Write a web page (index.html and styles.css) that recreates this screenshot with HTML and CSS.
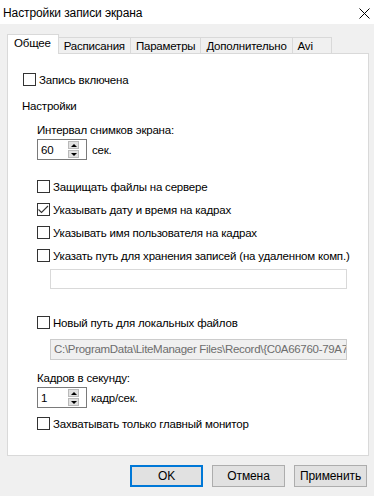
FILE: index.html
```html
<!DOCTYPE html>
<html lang="ru">
<head>
<meta charset="utf-8">
<title>Настройки записи экрана</title>
<link rel="stylesheet" href="styles.css">
</head>
<body>
<div class="window">
  <div class="titlebar">
    <span class="title">Настройки записи экрана</span>
    <svg class="close" width="11" height="11" viewBox="0 0 11 11"><path d="M0.5 0.5L10.5 10.5M10.5 0.5L0.5 10.5" stroke="#000" stroke-width="1" fill="none"/></svg>
  </div>
  <div class="content">
    <div class="tabs">
      <div class="tab active">Общее</div>
      <div class="tab">Расписания</div>
      <div class="tab">Параметры</div>
      <div class="tab">Дополнительно</div>
      <div class="tab">Avi</div>
    </div>
    <div class="panel">
      <div class="check top-check"><span class="box"></span><span>Запись включена</span></div>
      <div class="heading">Настройки</div>
      <div class="group">
        <div class="label">Интервал снимков экрана:</div>
        <div class="spin-row">
          <div class="spinner"><span class="spin-value">60</span><span class="spin"><span class="spin-btn up"><i></i></span><span class="spin-btn down"><i></i></span></span></div>
          <span class="unit">сек.</span>
        </div>
        <div class="checks">
          <div class="check"><span class="box"></span><span>Защищать файлы на сервере</span></div>
          <div class="check"><span class="box checked"><svg width="11" height="11" viewBox="0 0 11 11"><path d="M0.5 5.5L3.5 8.5L10 2" stroke="#333" stroke-width="1.1" fill="none"/></svg></span><span>Указывать дату и время на кадрах</span></div>
          <div class="check"><span class="box"></span><span>Указывать имя пользователя на кадрах</span></div>
          <div class="check"><span class="box"></span><span>Указать путь для хранения записей (на удаленном комп.)</span></div>
        </div>
        <div class="field"></div>
        <div class="check local-check"><span class="box"></span><span>Новый путь для локальных файлов</span></div>
        <div class="field disabled">C:\ProgramData\LiteManager Files\Record\{C0A66760-79A7</div>
        <div class="label fps-label">Кадров в секунду:</div>
        <div class="spin-row">
          <div class="spinner"><span class="spin-value">1</span><span class="spin"><span class="spin-btn up"><i></i></span><span class="spin-btn down"><i></i></span></span></div>
          <span class="unit unit-fps">кадр/сек.</span>
        </div>
        <div class="check last-check"><span class="box"></span><span>Захватывать только главный монитор</span></div>
      </div>
    </div>
    <div class="buttons">
      <button class="btn default">OK</button>
      <button class="btn">Отмена</button>
      <button class="btn">Применить</button>
    </div>
  </div>
</div>
</body>
</html>
```

FILE: styles.css
```css
* { box-sizing: border-box; }
html, body { margin: 0; padding: 0; }
body {
  width: 374px;
  height: 496px;
  overflow: hidden;
  background: #f0f0f0;
  font-family: "Liberation Sans", Arial, sans-serif;
  font-size: 11.5px;
  letter-spacing: -0.2px;
  color: #000;
}
.titlebar {
  height: 24px;
  background: #fff;
  display: flex;
  align-items: center;
  justify-content: space-between;
  padding: 1px 4px 0 3px;
}
.title { font-size: 12px; letter-spacing: -0.1px; color: #000; }
.close { display: block; margin-top: 1px; }

.content { padding: 10px 5px 0 7px; }

.tabs {
  display: flex;
  height: 20px;
  margin-bottom: -1px;
  position: relative;
}
.tab {
  height: 16px;
  margin-top: 3px;
  padding: 0 5px;
  min-width: 39px;
  border: 1px solid #d9d9d9;
  border-bottom: none;
  border-left: none;
  background: #f0f0f0;
  line-height: 16px;
  white-space: nowrap;
}
.tab.active {
  height: 20px;
  margin-top: 0;
  background: #fff;
  border-left: 1px solid #d9d9d9;
  padding: 0 7px 0 6px;
  line-height: 17px;
  position: relative;
  z-index: 1;
}

.panel {
  height: 403px;
  background: #fff;
  border: 1px solid #d9d9d9;
  padding: 17px 0 0 14px;
  display: flex;
  flex-direction: column;
  align-items: flex-start;
}

.check {
  display: flex;
  align-items: center;
  height: 17px;
  white-space: nowrap;
}
.box {
  width: 13px;
  height: 13px;
  border: 1px solid #333;
  background: #fff;
  margin-left: 1px;
  margin-right: 3px;
  display: flex;
  align-items: center;
  justify-content: center;
}
.box svg { display: block; }

.heading { margin-top: 10px; line-height: 16px; }
.group {
  padding-left: 15px;
  display: flex;
  flex-direction: column;
  align-items: flex-start;
  width: 100%;
}
.group .box { margin-left: 0; }
.label { margin-top: 8px; line-height: 16px; }

.spin-row {
  display: flex;
  align-items: center;
  margin-top: 1px;
}
.spinner {
  width: 50px;
  height: 21px;
  border: 1px solid #7a7a7a;
  background: #fff;
  display: flex;
  align-items: center;
  padding: 0 0 0 3px;
}
.spin-value { flex: 1; }
.spin {
  display: flex;
  flex-direction: column;
  gap: 1px;
  margin-right: 7px;
}
.spin-btn {
  width: 11px;
  height: 8px;
  background: #e1e1e1;
  border: 1px solid #b9b9b9;
  display: flex;
  align-items: center;
  justify-content: center;
}
.spin-btn i {
  width: 0;
  height: 0;
  border-left: 3px solid transparent;
  border-right: 3px solid transparent;
}
.spin-btn.up i { border-bottom: 3px solid #000; }
.spin-btn.down i { border-top: 3px solid #000; }
.unit { margin-left: 5px; }
.unit-fps { margin-left: 4px; }

.checks {
  margin-top: 18px;
  display: flex;
  flex-direction: column;
  gap: 6px;
}
.field {
  margin-top: 5px;
  margin-left: 13px;
  width: 297px;
  height: 20px;
  border: 1px solid #d9d9d9;
  background: #fff;
}
.field.disabled {
  height: 21px;
  margin-top: 8px;
  background: #f0f0f0;
  border-color: #cccccc;
  color: #6d6d6d;
  padding: 0 0 0 3px;
  line-height: 19px;
  letter-spacing: -0.3px;
  overflow: hidden;
  white-space: nowrap;
}
.local-check { margin-top: 25px; }
.fps-label { margin-top: 10px; }
.last-check { margin-top: 7px; }

.buttons {
  display: flex;
  justify-content: flex-end;
  gap: 9px;
  margin-top: 9px;
  padding-right: 2px;
}
.btn {
  width: 73px;
  height: 22px;
  background: #e1e1e1;
  border: 1px solid #adadad;
  font-family: inherit;
  font-size: 12px;
  letter-spacing: -0.1px;
  color: #000;
  padding: 0;
}
.btn.default { border: 2px solid #0078d7; }
```
